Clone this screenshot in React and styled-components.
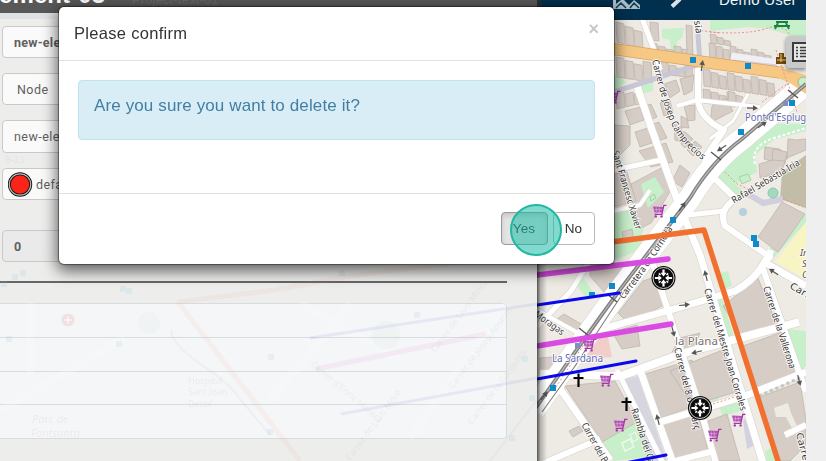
import React from "react";
import styled, { createGlobalStyle } from "styled-components";

const GlobalStyle = createGlobalStyle`
  * { box-sizing: border-box; }
  html, body { margin: 0; height: 100%; overflow: hidden; background: #efefef; }
  body { font-family: "Liberation Sans", Arial, sans-serif; }
`;

const Page = styled.div`
  position: relative;
  display: grid;
  grid-template-columns: 537px 269px 20px;
  width: 826px;
  height: 461px;
  overflow: hidden;
  background: #efefef;
`;

const Panel = styled.section`
  position: relative;
  display: flex;
  flex-direction: column;
  height: 461px;
  overflow: hidden;
  background: #ededec;
`;

const GhostMap = styled.svg`
  position: absolute;
  inset: 0;
  pointer-events: none;
`;

const PanelHeader = styled.header`
  flex: none;
  display: flex;
  height: 19px;
  overflow: hidden;
  border-bottom: 6px solid #dfe2e5;
  background: #585858;
`;

const PanelTitle = styled.h1`
  margin: -19px 0 0 -1px;
  width: 133px;
  font: bold 24px/28px "Liberation Sans", Arial, sans-serif;
  letter-spacing: 0.1px;
  color: #fff;
  white-space: nowrap;
`;

const PanelSubtitle = styled.span`
  margin-top: -7px;
  font-size: 12.5px;
  line-height: 15px;
  letter-spacing: 0.35px;
  color: #676767;
`;

const Fields = styled.div`
  display: flex;
  flex-direction: column;
  gap: 15px;
  padding: 7px 30px 0 2px;
`;

const Field = styled.div`
  display: flex;
  align-items: center;
  height: 32.2px;
  margin-top: ${(p) => (p.$spaced ? "15px" : "0")};
  padding: 1px 0 0 ${(p) => p.$inset || 11}px;
  border: 1px solid #c9c9c9;
  border-radius: 4px;
  background: ${(p) => (p.$disabled ? "#eaeaea" : "#fbfafa")};
  font: ${(p) => (p.$strong ? "bold" : "normal")} 12.5px Roboto, sans-serif;
  letter-spacing: ${(p) => (p.$strong ? 0.25 : 0.45)}px;
  color: #5f5f5f;
`;

const Swatch = styled.svg`
  flex: none;
  margin: 1px 3px 0 0;
`;

const Rule = styled.hr`
  width: 507px;
  height: 2px;
  margin: 19px 0 20px;
  border: 0;
  flex: none;
  background: #666769;
`;

const Table = styled.div`
  width: 507px;
  border: 1px solid #d9dcde;
  border-left: 0;
  border-radius: 0 4px 4px 0;
  background: #f5f6f8;
`;

const TableRow = styled.div`
  height: 33.4px;
  & + & { border-top: 1px solid #d9dcde; }
`;

const MapColumn = styled.main`
  position: relative;
  display: flex;
  flex-direction: column;
  height: 461px;
  overflow: hidden;
`;

const NavBar = styled.nav`
  flex: none;
  display: flex;
  height: 20px;
  overflow: hidden;
  background: #00304f;
  box-shadow: inset 4px 0 2px #26313a;
`;

const NavIcons = styled.svg`
  flex: none;
`;

const UserName = styled.span`
  margin: -9px 0 0 2px;
  font-size: 15px;
  line-height: 17px;
  letter-spacing: 0.2px;
  color: #f2f5f7;
  white-space: nowrap;
`;

const MapCanvas = styled.svg`
  display: block;
  flex: none;
`;

const LayerButton = styled.div`
  position: absolute;
  right: 0;
  top: 36px;
  width: 20px;
  height: 32px;
  padding: 6px 0 0 6px;
  border-radius: 4px 0 0 4px;
  background: #c9c9c9;
  box-shadow: 0 2px 4px rgba(0, 0, 0, 0.45);
  overflow: hidden;
`;

const Dialog = styled.div`
  position: absolute;
  left: 59px;
  top: 7px;
  display: flex;
  flex-direction: column;
  width: 555px;
  height: 257px;
  border-radius: 5px;
  background: #fff;
  box-shadow: 0 0 1px 1px rgba(0, 0, 0, 0.42), 0 5px 15px 2px rgba(0, 0, 0, 0.6);
`;

const DialogHeader = styled.header`
  display: flex;
  justify-content: space-between;
  height: 54px;
  padding: 16px 15px 0;
  border-bottom: 1px solid #e2e2e2;
`;

const DialogTitle = styled.h2`
  margin: 0;
  font-size: 16.5px;
  font-weight: 400;
  line-height: 20px;
  letter-spacing: 0.3px;
  color: #333;
`;

const CloseButton = styled.button`
  align-self: flex-start;
  margin-top: -4px;
  padding: 0;
  border: 0;
  background: none;
  font: bold 18px/20px "Liberation Sans", Arial, sans-serif;
  color: #c8c8c8;
`;

const DialogBody = styled.div`
  flex: 1;
  padding: 19px 19px 0;
`;

const Alert = styled.p`
  margin: 0;
  height: 60px;
  padding: 15px;
  border: 1px solid #bfe4ee;
  border-radius: 4px;
  background: #d9edf7;
  font-size: 17px;
  line-height: 20px;
  letter-spacing: 0.12px;
  color: #437fa3;
`;

const DialogFooter = styled.footer`
  display: flex;
  justify-content: flex-end;
  gap: 5px;
  height: 71px;
  padding: 18px 19px 0;
  border-top: 1px solid #e2e2e2;
`;

const DialogButton = styled.button`
  width: ${(p) => (p.$pressed ? 47 : 42)}px;
  height: 33px;
  padding: 0 1px 1px 0;
  border: 1px solid ${(p) => (p.$pressed ? "#999" : "#b9b9b9")};
  border-radius: 4px;
  background: ${(p) => (p.$pressed ? "#e4e4e4" : "#fff")};
  box-shadow: ${(p) => (p.$pressed ? "inset 0 3px 5px rgba(0,0,0,.13)" : "none")};
  font: 13.5px "Liberation Sans", Arial, sans-serif;
  letter-spacing: 0.1px;
  color: #333;
`;

const ClickMarker = styled.div`
  position: absolute;
  left: 510px;
  top: 204px;
  width: 52px;
  height: 52px;
  border: 2px solid #20b8a2;
  border-radius: 50%;
  background: rgba(27, 187, 165, 0.55);
`;

/* Map geometry, in page pixels */

const GREENS = [
  "662,29 684,28 682,38 677,41 676,52 671,52 670,40 662,38",
  "710,20 806,20 806,42 786,34 768,29 748,27 710,31",
  "614,74 626,82 614,92",
  "638,84 653,81 653,91 640,94",
  "614,214 634,209 644,225 640,250 614,260",
  "711,172 752,143 768,124 806,124 806,131 775,139 755,155 757,172 735,184 748,194 742,200 731,190",
  "574,282 583,278 595,294 587,299",
  "602,442 640,420 672,408 673,419 649,429 655,456 614,461",
  "717,298 722,298 734,337 728,339",
  "720,273 728,271 732,286 723,289",
  "711,397 718,396 719,402 711,403",
  "717,403 744,394 748,409 723,416",
  "787,329 806,331 806,366 799,374",
  "765,451 786,441 792,461 767,461",
  "780,230 806,214 806,222 770,262 766,256",
];

const BUILDINGS = [
  "590,264 610,260 622,268 604,292 590,276",
  "564,314 583,325 574,331 554,321",
  "618,313 643,281 654,277 664,305 628,323",
  "612,332 637,325 640,346 622,349",
  "540,358 566,356 562,371 540,374",
  "565,386 615,381 637,422 602,442",
  "569,431 579,426 583,431 573,437",
  "645,374 692,360 704,402 661,418",
  "680,338 700,333 690,356 668,359",
  "723,306 758,278 777,325 742,337",
  "740,347 785,331 797,374 755,388",
  "670,371 725,349 740,391 692,405",
  "757,398 800,382 806,420 806,445 790,461 777,461",
  "708,421 727,414 740,461 716,461",
  "661,425 698,413 708,450 672,461",
  "782,202 805,214 778,252 758,237",
  "765,147 780,149 788,158 781,164 764,159",
  "773,149 787,152 785,164 772,160",
  "773,160 785,161 782,172 760,178 759,164",
  "788,139 797,140 806,139 806,150 787,158",
  "631,184 665,166 672,186 668,195 651,223 641,228 634,215",
  "625,111 640,107 644,120 630,125",
  "644,106 651,104 657,117 648,121",
  "635,132 648,128 652,143 640,147",
  "650,125 659,122 667,138 655,142",
  "639,151 666,143 673,162 651,167",
  "672,181 680,165 690,173 682,187",
  "614,125 630,126 630,145 621,154 614,160",
  "674,124 682,128 680,142 675,140",
  "684,131 693,139 685,148 681,144",
  "695,141 702,147 693,156 687,150",
  "614,174 627,172 636,201 614,207",
  "712,106 726,98 733,111 710,123",
  "664,84 676,80 680,91 670,98",
  "680,79 694,75 692,91 684,95",
  "684,106 695,105 695,120 688,121",
  "681,116 687,119 689,128 681,127",
  "660,103 670,100 673,113 664,116",
  "622,232 632,229 634,241 624,243",
];

const STREETS = [
  { d: "M642 18L657 58L660 70", w: 5 },
  { d: "M636 83L652 130L679 205L700 255L763 463", w: 7 },
  { d: "M698 60V100Q700 119 724 130L703 161", w: 6 },
  { d: "M677 106L697 100L760 107", w: 4 },
  { d: "M614 170L661 160", w: 5 },
  { d: "M614 211L640 205L650 190", w: 4 },
  { d: "M705 169L736 199Q718 209 725 226L770 257L762 266L806 392", w: 6 },
  { d: "M679 216L724 211", w: 5 },
  { d: "M649 252L676 335L700 408L716 463", w: 6 },
  { d: "M584 334L681 307L735 291Q760 277 771 250", w: 7 },
  { d: "M762 261L806 286", w: 7 },
  { d: "M540 374L621 376L681 354L799 322", w: 8 },
  { d: "M617 370L663 463", w: 5 },
  { d: "M639 367L673 463", w: 7 },
  { d: "M657 423L742 397L806 372", w: 7 },
  { d: "M558 386L610 460", w: 7 },
  { d: "M544 463L600 439", w: 6 },
  { d: "M537 327L571 291L590 260", w: 5 },
  { d: "M537 310L585 337", w: 4 },
  { d: "M668 463L714 451", w: 6 },
  { d: "M785 435L806 425", w: 6 },
  { d: "M710 139L733 121L748 94", w: 3 },
];

const RAIL = "M534 410C565 367 610 301 642 261L690 198Q712 161 742 139L806 84";

const LINES = [
  { d: "M537 275L668 259", color: "#d94be3", w: 5.5 },
  { d: "M537 346L671 324", color: "#d94be3", w: 5.5 },
  { d: "M537 305L619 293", color: "#0a08ee", w: 3 },
  { d: "M537 379L636 361", color: "#0a08ee", w: 3 },
  { d: "M620 464L666 455", color: "#0a08ee", w: 3 },
  { d: "M604 243L704 230L779 464", color: "#f2702f", w: 5.4 },
];

const STOPS = [
  [693, 60], [748, 66], [792, 103], [741, 132], [673, 220], [754, 238],
  [756, 244], [612, 286], [592, 295], [553, 388],
];

const CARTS = [[589, 345], [606, 380], [620, 425], [738, 420], [714, 435], [659, 211], [613, 97]];

const LABELS = [
  { id: "camprecios", d: "M654 60Q662 94 671 118Q679 140 703 158", t: "Carrer de Josep Camprecios", len: 113 },
  { id: "iglesia", d: "M694 6L698 34", t: "glésia", len: 28 },
  { id: "xavier", d: "M614 151L638 231", t: "Sant Francesc Xavier", len: 82 },
  { id: "iria", d: "M733 202L801 162", t: "Rafael Sebastià Iria", len: 77 },
  { id: "cornella", d: "M622 298Q644 272 672 226", t: "Carretera de Cornellà", len: 86 },
  { id: "moragas", d: "M535 314L564 335", t: "Moragas", len: 34 },
  { id: "corrales", d: "M706 289L743 412", t: "Carrer del Mestre Joan Corrales", len: 127 },
  { id: "vallerona", d: "M765 287L792 370", t: "Carrer de la Vallerona", len: 86 },
  { id: "vuit", d: "M676 348L697 432", t: "Carrer del 8 de Març", len: 84 },
  { id: "carrer", d: "M790 286L830 309", t: "Carrer", len: 33 },
  { id: "bottom", d: "M583 424L611 474", t: "Carrer del Bruc", len: 56 },
  { id: "rambla", d: "M633 409L656 480", t: "Rambla del Carme", len: 74 },
  { id: "edge", d: "M798 433L807 468", t: "Carrer", len: 33 },
];

const ARROWS = [
  [706, 276, -104], [684, 305, -6], [673, 331, 75], [697, 352, 166], [799, 380, 75],
  [774, 272, 214], [702, 66, -82], [752, 108, 2], [762, 125, -35], [722, 148, 148],
  [682, 207, -55], [544, 396, -52], [658, 420, -104],
];

// Rows of narrow terrace plots along the older streets
const TERRACES = [
  { x: 616, y: 22, n: 3, w: 9, h: 20, s: 2 },
  { x: 650, y: 43, n: 5, w: 8, h: 10, s: 1 },
  { x: 650, y: 22, n: 1, w: 9, h: 18, s: 1 },
  { x: 686, y: 25, n: 1, w: 7, h: 30, s: 1 },
  { x: 709, y: 43, n: 9, w: 7, h: 18, s: 1 },
  { x: 710, y: 34, n: 3, w: 7, h: 9, s: 1 },
  { x: 616, y: 57, n: 4, w: 9, h: 20, s: 1.4 },
  { x: 661, y: 62, n: 4, w: 8, h: 12, s: 1 },
  { x: 703, y: 69, n: 9, w: 8, h: 17, s: 1.2 },
  { x: 703, y: 89, n: 4, w: 8, h: 14, s: 1 },
  { x: 728, y: 91, n: 2, w: 8, h: 11, s: 2 },
  { x: 616, y: 94, n: 3, w: 9, h: 15, s: -2 },
];

function plots({ x, y, n, w, h, s }) {
  return Array.from({ length: n }, (_, i) => {
    const left = x + i * w;
    const top = y + i * s + (i % 3) * 2;
    const base = y + h + i * s;
    return `${left},${top} ${left + w - 1},${top + s} ${left + w},${base + s} ${left + 1},${base}`;
  });
}

function Cart({ x, y }) {
  return (
    <g transform={`translate(${x - 6} ${y - 6})`}>
      <path d="M0 1.5L10 2L8.6 7.6H1.6Z" fill="#b14fb7" />
      <path d="M3.3 2.5V7M6.2 2.5V7M1.5 4.7H9" stroke="#e3bce2" strokeWidth=".6" />
      <path d="M13.5 .4H10.8L8.8 9.4H1.6" fill="none" stroke="#a535a8" strokeWidth="1.4" />
      <circle cx="2.8" cy="11.4" r="1.2" fill="#a535a8" />
      <circle cx="8.6" cy="11.4" r="1.2" fill="#a535a8" />
    </g>
  );
}

function Junction({ x, y }) {
  return (
    <g transform={`translate(${x} ${y})`}>
      <circle r="12" fill="#0c0c0c" />
      <circle r="10.5" fill="none" stroke="#e5e5e5" strokeWidth=".9" />
      {[0, 90, 180, 270].map((a) => (
        <g key={a} transform={`rotate(${a})`}>
          <path d="M-1.1-8.6H1.1V-5.2H3L0-1.6L-3-5.2H-1.1Z" fill="#fff" />
          <path d="M3-3L4.6-4.6" stroke="#fff" strokeWidth="1.5" />
        </g>
      ))}
    </g>
  );
}

function CityMap() {
  return (
    <MapCanvas width="269" height="441" viewBox="537 20 269 441">
      <defs>
        <linearGradient id="panelShade" x1="0" x2="1">
          <stop offset="0" stopColor="#000" stopOpacity=".65" />
          <stop offset=".35" stopColor="#000" stopOpacity=".25" />
          <stop offset="1" stopColor="#000" stopOpacity="0" />
        </linearGradient>
      </defs>
      <rect x="537" y="20" width="269" height="441" fill="#eeebe5" />
      {GREENS.map((p) => <polygon key={p} points={p} fill="#c6efca" />)}
      <polygon points="806,222 775,262 806,279" fill="#f8f5c4" />
      <polygon points="782,172 806,155 806,208 780,199" fill="#c1bda6" />
      <polygon points="578,333 606,327 612,357 578,360" fill="#f2ceca" />
      <polygon points="625,379 638,376 667,461 652,461" fill="#d7d6e0" />
      {TERRACES.flatMap(plots).concat(BUILDINGS).map((p, i) => (
        <polygon key={i} points={p} fill="#d6cdc6" stroke="#bcb0a7" strokeWidth=".7" />
      ))}
      <polygon points="743,421 748,416 755,445 747,449" fill="#d2d1df" />
      <polygon points="641,184 655,177 664,192 648,208 644,196" fill="#c6efca" />
      <path d="M650 197L654 194L656 198L651 201Z" fill="none" stroke="#9fd0a5" />
      <polygon points="774,408 788,403 791,413 798,428 793,430 786,417 776,417" fill="#eeebe5" />
      <polygon points="739,177 748,174 751,180 742,184" fill="#c6efca" stroke="#a5d2aa" />
      <polygon points="622,443 630,439 634,447 625,451" fill="#c6efca" stroke="#eef8ee" strokeWidth="1.4" />
      <polygon points="630,435 635,432 638,439 633,442" fill="#c6efca" stroke="#eef8ee" strokeWidth="1.2" />
      <path d={RAIL} fill="none" stroke="#ddd8d2" strokeWidth="23" />
      {STREETS.map((s) => <path key={s.d} d={s.d} fill="none" stroke="#dcd7d1" strokeWidth={s.w + 1.4} strokeLinejoin="round" />)}
      {STREETS.map((s) => <path key={s.d} d={s.d} fill="none" stroke="#fff" strokeWidth={s.w} strokeLinejoin="round" />)}
      <path d={RAIL} fill="none" stroke="#fff" strokeWidth="22" />
      <path d="M614 92L700 64L697 20" fill="none" stroke="#c9c7d5" strokeWidth="5" />
      <path d="M731 57L780 64" stroke="#efeff5" strokeWidth="9" />
      <path d="M733 61L777 66" stroke="#d2d0de" strokeWidth="3" />
      <path d="M748 194L763 203L783 199" fill="none" stroke="#d0cfdd" strokeWidth="6" />
      <path d="M606 48L648 54L711 63L783 73" fill="none" stroke="#dba55f" strokeWidth="12" />
      <path d="M606 48L648 54L711 63L783 73" fill="none" stroke="#f6c884" strokeWidth="10.5" />
      <path d="M778 67L806 75V94L790 83L778 78Z" fill="#f6c884" />
      <circle cx="803" cy="82" r="5" fill="#c6efca" stroke="#99b69b" />
      <g fill="none" stroke="#e79288" strokeWidth="1" strokeDasharray="2 2">
        <path d="M556 387L607 309L660 239L701 183L725 154" />
        <path d="M710 32Q748 35 768 28Q784 24 790 35M776 50L788 85" />
        <path d="M697 30L720 33M725 172L737 184L748 189M783 199L806 208" />
        <path d="M762 102L788 83L797 112M713 404L738 396" />
      </g>
      <path d="M755 164Q750 146 774 138L806 128" fill="none" stroke="#fff" strokeWidth="2" strokeDasharray="3 2" />
      <path d={RAIL} fill="none" stroke="#808080" strokeWidth="3.8" />
      <path d={RAIL} fill="none" stroke="#bababa" strokeWidth="1.2" />
      <path d="M542 412L578 362M573 369L629 284" fill="none" stroke="#808080" strokeWidth="1.1" />
      {[[584, 332], [612, 298], [716, 156], [793, 94]].map(([x, y]) => (
        <path key={x} d={`M${x - 5} ${y - 4}L${x + 5} ${y + 4}`} stroke="#555" strokeWidth="1.5" />
      ))}
      <circle cx="773" cy="193" r="5" fill="#a2dac0" stroke="#8bc7ad" />
      <circle cx="743" cy="212" r="4" fill="#b5d0df" />
      <path d="M759 396L802 377" stroke="#c8c4c0" strokeWidth="3" strokeDasharray="3 3" />
      {ARROWS.map(([x, y, a]) => (
        <g key={`${x}-${y}`} transform={`translate(${x} ${y}) rotate(${a})`}>
          <path d="M-5 0H2" stroke="#555" strokeWidth="1.2" />
          <path d="M1-2.8L6 0L1 2.8Z" fill="#555" />
        </g>
      ))}
      {STOPS.map(([x, y]) => <rect key={`${x}-${y}`} x={x - 3} y={y - 3} width="6" height="6" fill="#0f8acb" />)}
      <rect x="575" y="343" width="5" height="5" fill="#7c8fc9" />
      <rect x="783" y="101" width="5" height="5" fill="#8587cb" />
      {CARTS.map(([x, y]) => <Cart key={`${x}-${y}`} x={x} y={y} />)}
      {LABELS.map((l) => (
        <g key={l.id}>
          <path id={l.id} d={l.d} fill="none" />
          <text fontFamily="Noto Sans, sans-serif" fontSize="9.6" fill="#38322e" stroke="#fff" strokeWidth="1.6" paintOrder="stroke" dy="2">
            <textPath href={`#${l.id}`} textLength={l.len} lengthAdjust="spacingAndGlyphs">{l.t}</textPath>
          </text>
        </g>
      ))}
      <g fontFamily="Noto Sans, sans-serif" stroke="#fff" strokeWidth="1.7" paintOrder="stroke">
        <text x="675" y="345" fontSize="11.5" fill="#77716c" textLength="43">la Plana</text>
        <text x="552" y="362" fontSize="10" fill="#5f6bb1" textLength="51">La Sardana</text>
        <text x="745" y="121" fontSize="10.3" fill="#5f6bb1" textLength="77" lengthAdjust="spacingAndGlyphs">Pont d'Esplugues</text>
        <g fontSize="9.5" fontStyle="italic" fill="#554f45">
          <text x="800" y="256">Institut</text>
          <text x="802" y="267">Severo</text>
          <text x="802" y="278">Ochoa</text>
        </g>
      </g>
      <g stroke="#060606" strokeWidth="2.2">
        <path d="M578.5 373.5V387M573.5 378H583.5" />
        <path d="M626.5 397.5V411M621.5 402H631.5" />
      </g>
      <path d="M776 22H788M778 23L775 29M786 23L789 29M774 26H790" stroke="#178241" strokeWidth="1.8" />
      <path d="M776 64V57H779V53H784V57H787V64Z" fill="#734a08" />
      <path d="M777 60H786M781 54V62" stroke="#e5c794" strokeWidth="1" />
      {LINES.map((l) => (
        <path key={l.d} d={l.d} fill="none" stroke={l.color} strokeWidth={l.w} strokeLinecap="round" strokeLinejoin="round" />
      ))}
      <Junction x={663.5} y={278} />
      <Junction x={700} y={408} />
      <rect x="537" y="20" width="10" height="441" fill="url(#panelShade)" />
    </MapCanvas>
  );
}

function FaintMap() {
  return (
    <GhostMap width="537" height="461" fill="none">
      <path d="M0 410L125 338M30 303V375M300 303L400 360M270 400L350 303M507 303L410 438" stroke="#fff" strokeWidth="8" opacity=".18" />
      <g opacity=".07">
        <path d="M178 302L275 290L350 276L460 262M178 302L300 461" stroke="#ef8c60" strokeWidth="5" />
        <path d="M310 338L537 304M341 414L537 378" stroke="#3837d8" strokeWidth="3" />
        <path d="M316 369L486 334" stroke="#dc48b8" strokeWidth="5" />
        <path d="M490 461L537 400M171 330C174 356 220 369 240 399L270 435" stroke="#949ba3" strokeWidth="2" />
      </g>
      <g fill="#7abfd8" opacity=".13">
        {[[15, 277], [23, 273], [4, 284], [123, 289], [129, 291], [9, 339], [119, 344], [271, 357], [270, 432], [342, 273], [417, 315], [525, 359], [532, 398], [512, 438]].map(([x, y]) => (
          <rect key={`${x}-${y}`} x={x - 3} y={y - 3} width="6" height="6" />
        ))}
        <circle cx="149" cy="323" r="11" fill="#b5c9c4" opacity=".5" />
        <circle cx="386" cy="335" r="14" fill="#8bd79e" opacity=".4" />
      </g>
      <circle cx="68" cy="320" r="6.5" fill="#f2dfe2" />
      <path d="M68 316V324M64 320H72" stroke="#fff" />
      <g fill="#8c9197" opacity=".1" fontFamily="Noto Sans, sans-serif" fontSize="9">
        <g fontSize="11" fontStyle="italic">
          <text x="32" y="423">Parc de</text>
          <text x="31" y="437">Fontsanta</text>
        </g>
        <text x="188" y="384">Hospital</text>
        <text x="188" y="395">Sant Joan</text>
        <text x="188" y="407">Despí</text>
        <text x="5" y="163">B-23</text>
        <text transform="translate(310 365) rotate(40)">Carrer d'Enric Morera</text>
        <text transform="translate(435 353) rotate(-53)">Carrer de Lluís Millet</text>
        <text transform="translate(453 389) rotate(-53)">Carrer de Josep Anselm</text>
        <text transform="translate(472 425) rotate(-53)">Carrer de la Gardenia</text>
        <text transform="translate(350 461) rotate(-53)">Carrer de Lluís Moré</text>
      </g>
    </GhostMap>
  );
}

export default function App() {
  return (
    <Page>
      <GlobalStyle />
      <Panel>
        <PanelHeader>
          <PanelTitle>ement-03</PanelTitle>
          <PanelSubtitle>Project-test-01</PanelSubtitle>
        </PanelHeader>
        <Fields>
          <Field $strong>new-element-03</Field>
          <Field $inset={14}>Node</Field>
          <Field>new-element-03</Field>
          <Field $inset={5}>
            <Swatch width="25" height="25" viewBox="0 0 25 25">
              <circle cx="12" cy="12.5" r="10.7" fill="#fa2418" stroke="#111" strokeWidth="3" />
              <circle cx="12" cy="12.5" r="10.7" fill="none" stroke="#b5b5b5" strokeWidth="1.2" />
            </Swatch>
            default
          </Field>
          <Field $disabled $spaced $strong>0</Field>
        </Fields>
        <Rule />
        <Table>
          <TableRow />
          <TableRow />
          <TableRow />
          <TableRow />
        </Table>
        <FaintMap />
      </Panel>
      <MapColumn>
        <NavBar>
          <NavIcons width="180" height="20" viewBox="0 0 180 20" fill="none">
            <path d="M76 0H79V4L84 0H87L92 5L97 0L103 5V9H76V7Z" fill="#a9bbc6" />
            <path d="M79 8L84 3L89 8M93 8L97 3L102 8" stroke="#0e3a57" strokeWidth="1.5" />
            <path d="M135 6.5L143-1" stroke="#dbe3e8" strokeWidth="4" />
          </NavIcons>
          <UserName>Demo User</UserName>
        </NavBar>
        <CityMap />
        <LayerButton>
          <svg width="18" height="20" viewBox="0 0 18 20" fill="none" stroke="#3c3c3c">
            <rect x="1" y="1" width="20" height="18" strokeWidth="2" fill="#e6e6e6" />
            <path d="M4 5.5H6M4 8.5H6M4 11.5H6M4 14.5H6M8 5.5H18M8 8.5H18M8 11.5H18M8 14.5H18" strokeWidth="1.4" />
          </svg>
        </LayerButton>
      </MapColumn>
      <Dialog role="dialog">
        <DialogHeader>
          <DialogTitle>Please confirm</DialogTitle>
          <CloseButton aria-label="Close">×</CloseButton>
        </DialogHeader>
        <DialogBody>
          <Alert>Are you sure you want to delete it?</Alert>
        </DialogBody>
        <DialogFooter>
          <DialogButton $pressed>Yes</DialogButton>
          <DialogButton>No</DialogButton>
        </DialogFooter>
      </Dialog>
      <ClickMarker />
    </Page>
  );
}
